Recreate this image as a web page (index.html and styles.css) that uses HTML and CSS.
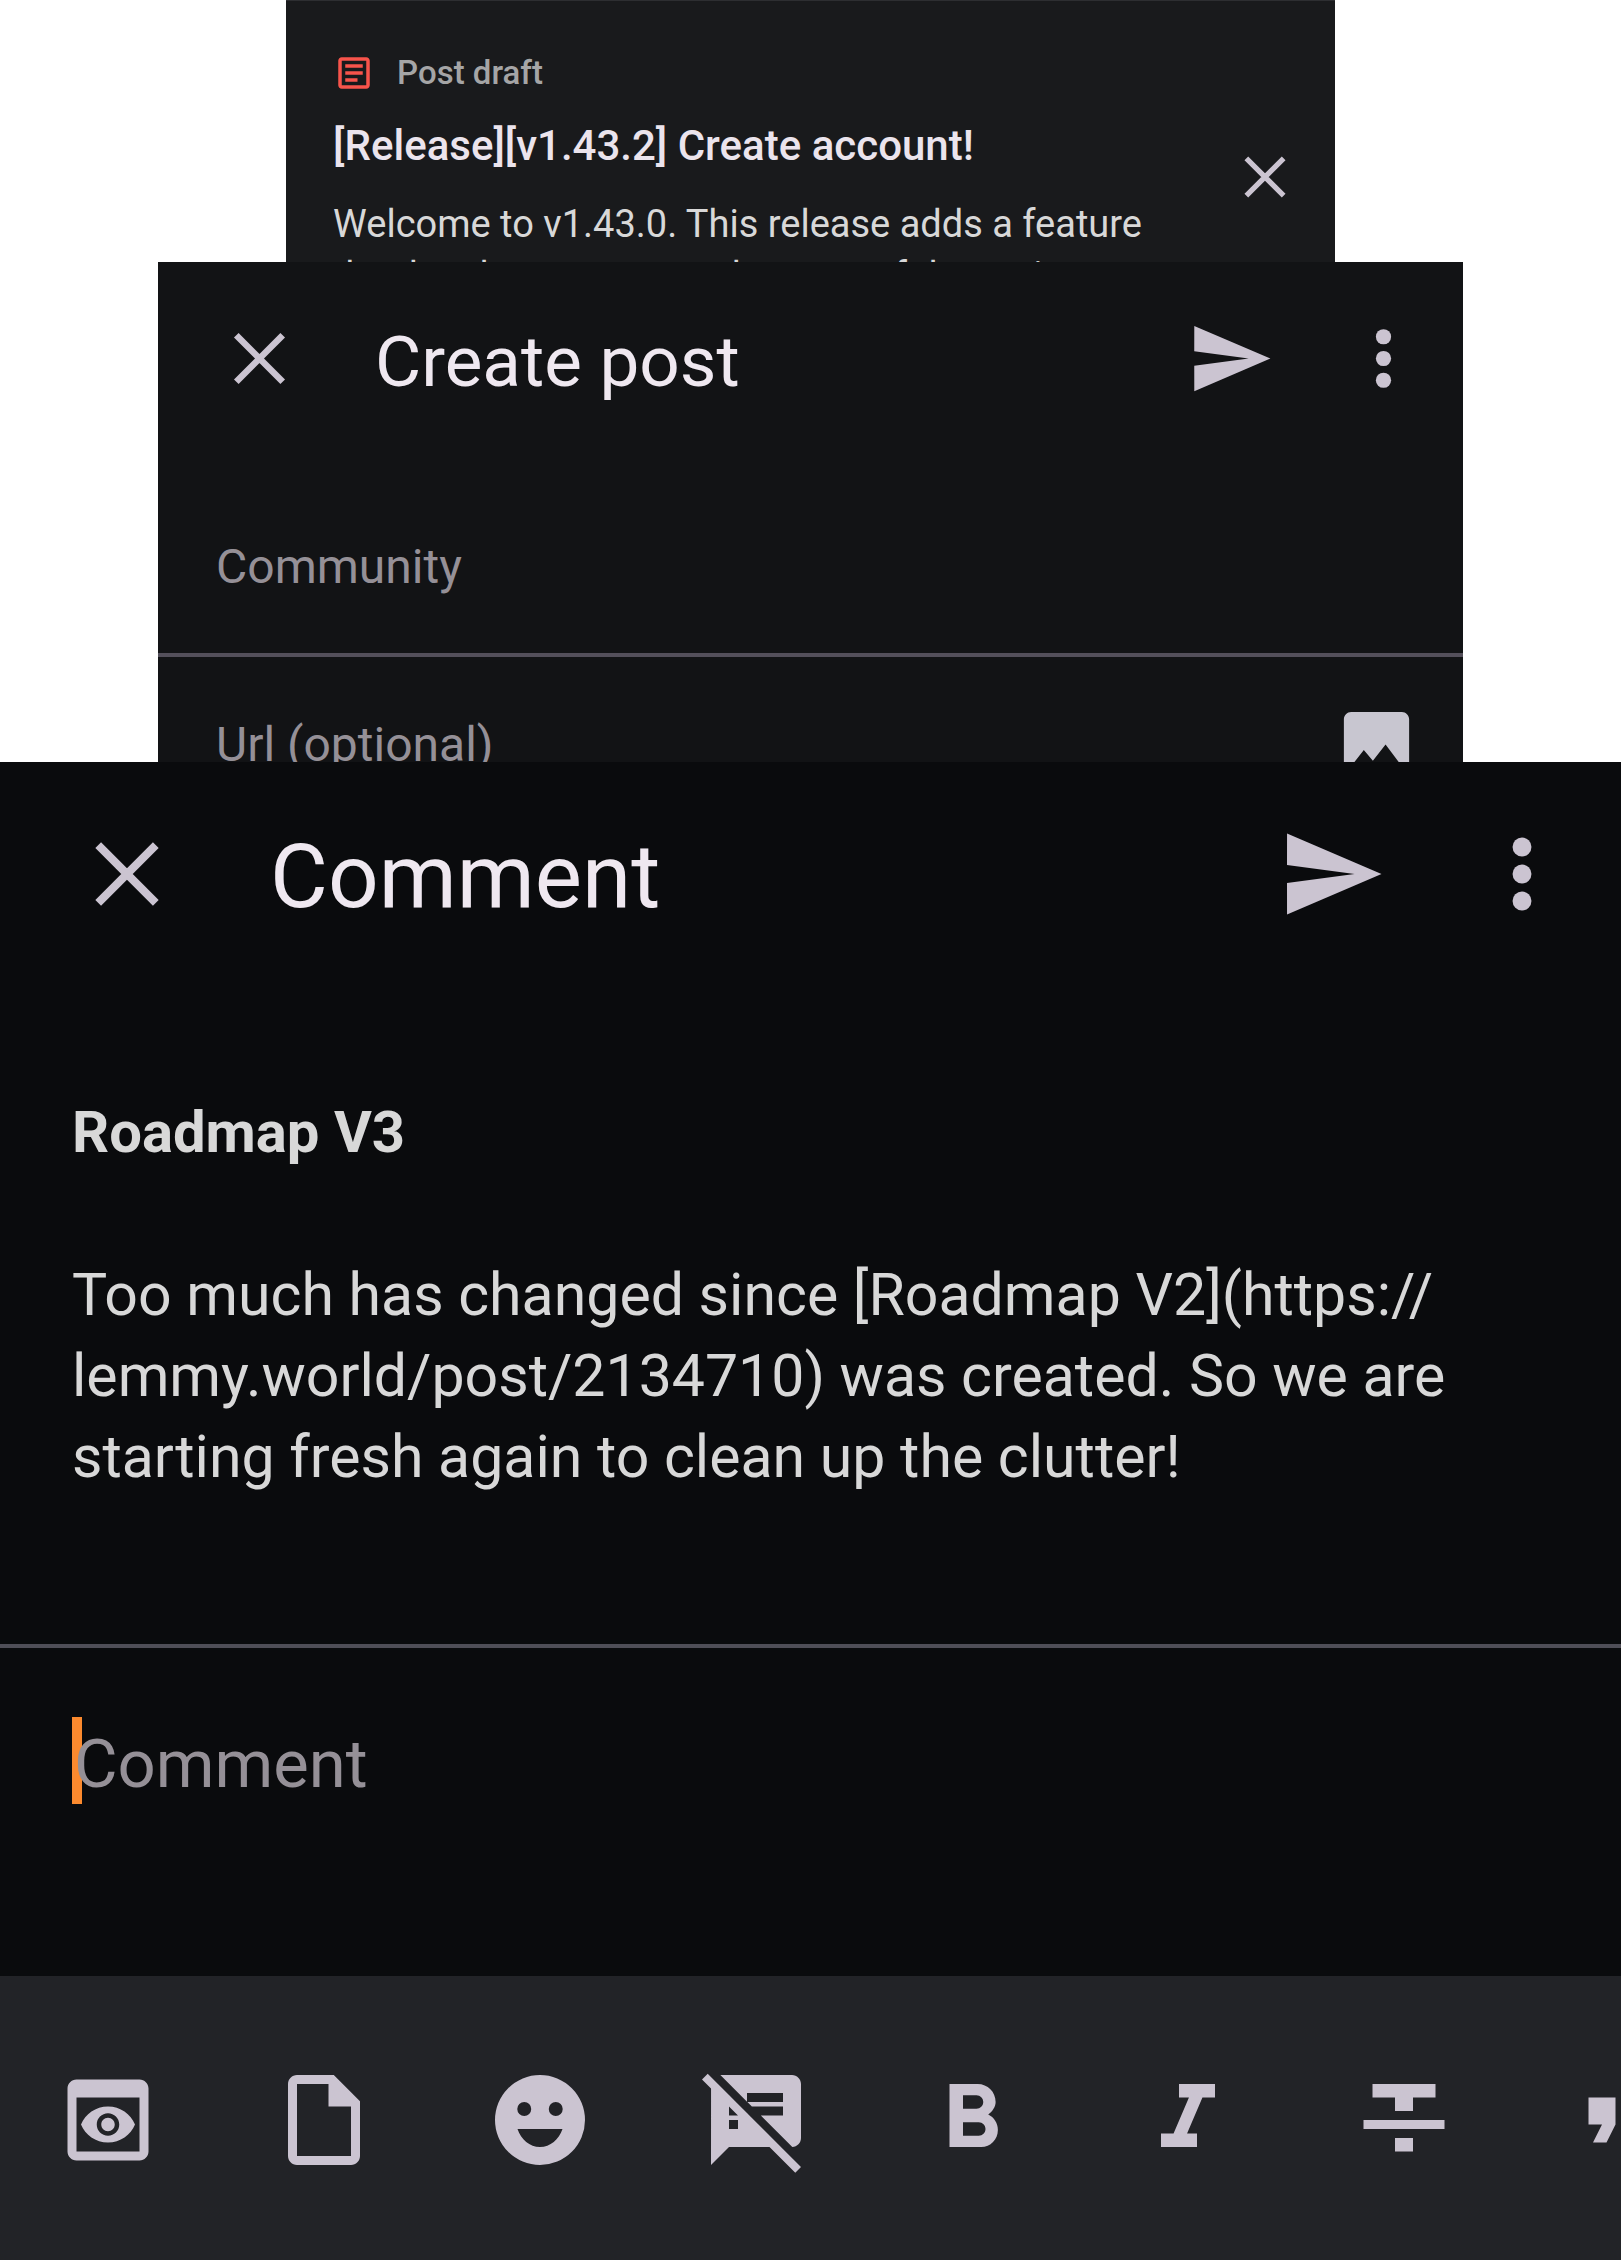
FILE: index.html
```html
<!DOCTYPE html>
<html lang="en">
<head>
<meta charset="utf-8">
<meta name="viewport" content="width=device-width, initial-scale=1">
<title>Drafts, posts and comments</title>
<link rel="stylesheet" href="styles.css">
</head>
<body>
<svg class="sprite" aria-hidden="true">
  <symbol id="close" viewBox="0 0 24 24"><path d="M5.600 5.600l12.800 12.800M18.400 5.600l-12.800 12.800" fill="none" stroke="currentColor" stroke-width="1.800"/></symbol>
  <symbol id="send" viewBox="0 0 24 24"><path d="M2.010 21L23 12 2.010 3 2 10l15 2-15 2z"/></symbol>
  <symbol id="more" viewBox="0 0 24 24"><circle cx="12" cy="6" r="2.100"/><circle cx="12" cy="12" r="2.100"/><circle cx="12" cy="18" r="2.100"/></symbol>
</svg>
<main class="stack">
  <article class="sheet draft">
    <div class="draft-text">
      <p class="draft-label">
        <svg class="draft-icon" viewBox="0 0 24 24" aria-hidden="true"><path d="M19 5v14H5V5h14m0-2H5c-1.100 0-2 .9-2 2v14c0 1.100.9 2 2 2h14c1.100 0 2-.9 2-2V5c0-1.100-.9-2-2-2zM14 17H7v-2h7zm3-4H7v-2h10zm0-4H7V7h10z"/></svg>
        Post draft
      </p>
      <h2 class="draft-title">[Release][v1.43.2] Create account!</h2>
      <p class="draft-body">Welcome to v1.43.0. This release adds a feature that has been requested as one of the main</p>
    </div>
    <button class="icon-button" type="button" aria-label="Delete draft"><svg class="icon"><use href="#close"/></svg></button>
  </article>

  <section class="sheet post">
    <header class="bar">
      <button class="icon-button" type="button" aria-label="Close"><svg class="icon"><use href="#close"/></svg></button>
      <h1 class="title">Create post</h1>
      <button class="icon-button" type="button" aria-label="Send"><svg class="icon"><use href="#send"/></svg></button>
      <button class="icon-button" type="button" aria-label="More options"><svg class="icon"><use href="#more"/></svg></button>
    </header>
    <div class="field">
      <input class="field-input" type="text" placeholder="Community" aria-label="Community">
    </div>
    <div class="field">
      <input class="field-input" type="text" placeholder="Url (optional)" aria-label="Url (optional)">
      <button class="icon-button image-button" type="button" aria-label="Add image"><svg class="icon" viewBox="0 0 24 24"><path d="M21 19V5c0-1.100-.9-2-2-2H5c-1.100 0-2 .9-2 2v14c0 1.100.9 2 2 2h14c1.100 0 2-.9 2-2zM8.500 13.500l2.500 3.010L14.500 12l4.500 6H5z"/></svg></button>
    </div>
  </section>

  <section class="sheet comment">
    <header class="bar">
      <button class="icon-button" type="button" aria-label="Close"><svg class="icon"><use href="#close"/></svg></button>
      <h1 class="title">Comment</h1>
      <button class="icon-button" type="button" aria-label="Send"><svg class="icon"><use href="#send"/></svg></button>
      <button class="icon-button" type="button" aria-label="More options"><svg class="icon"><use href="#more"/></svg></button>
    </header>
    <div class="quoted">
      <h2 class="quoted-title">Roadmap V3</h2>
      <p class="quoted-text">Too much has changed since [Roadmap V2](https://<wbr>lemmy.world/post/2134710) was created. So we are starting fresh again to clean up the clutter!</p>
    </div>
    <div class="composer">
      <span class="caret"></span>
      <textarea class="composer-input" rows="1" placeholder="Comment" aria-label="Comment"></textarea>
    </div>
    <div class="toolbar" role="toolbar" aria-label="Formatting">
      <button class="tool" type="button" aria-label="Preview"><svg class="icon" viewBox="0 0 24 24"><path d="M19 3H5c-1.110 0-2 .9-2 2v14c0 1.100.89 2 2 2h14c1.100 0 2-.9 2-2V5c0-1.100-.89-2-2-2zm0 16H5V7h14v12zm-5.500-6c0 .83-.67 1.500-1.500 1.500s-1.500-.67-1.500-1.500.67-1.500 1.500-1.500 1.500.67 1.500 1.500zM12 9c-2.730 0-5.060 1.660-6 4 .94 2.340 3.270 4 6 4s5.060-1.660 6-4c-.94-2.340-3.270-4-6-4zm0 6.500c-1.380 0-2.500-1.120-2.500-2.500s1.120-2.500 2.500-2.500 2.500 1.120 2.500 2.500-1.120 2.500-2.500 2.500z"/></svg></button>
      <button class="tool" type="button" aria-label="Drafts"><svg class="icon" viewBox="0 0 24 24"><path fill-rule="evenodd" d="M6 2c-1.100 0-2 .9-2 2v16c0 1.100.9 2 2 2h12c1.100 0 2-.9 2-2V7.830L14.170 2zM6 4h7v5h5v11H6z"/></svg></button>
      <button class="tool" type="button" aria-label="Emoji"><svg class="icon" viewBox="0 0 24 24"><path fill-rule="evenodd" d="M12 2a10 10 0 1 0 0 20 10 10 0 0 0 0-20zM8.500 8a1.550 1.550 0 1 1 0 3.100 1.550 1.550 0 0 1 0-3.100zM15.500 8a1.550 1.550 0 1 1 0 3.100 1.550 1.550 0 0 1 0-3.100zM12 18c-2.280 0-4.220-1.660-5-4h10c-.78 2.340-2.720 4-5 4z"/></svg></button>
      <button class="tool" type="button" aria-label="Spoiler"><svg class="icon" viewBox="0 0 24 24"><path d="M10.540 11l-.54-.54L7.540 8 6 6.460 2.380 2.840 1.270 1.730 0 3l2.010 2.010L2 22l4-4h9l5.730 5.730L22 22.460 17.540 18l-7-7zM8 14H6v-2h2v2zm-2-3V9l2 2H6zm14-9H4.080L10 7.920V6h8v2h-7.920l1 1H18v2h-4.920l6.990 6.990C21.140 17.950 22 17.080 22 16V4c0-1.100-.9-2-2-2z"/></svg></button>
      <button class="tool" type="button" aria-label="Bold"><svg class="icon" viewBox="0 0 24 24"><path d="M15.600 10.790c.97-.67 1.650-1.770 1.650-2.790 0-2.260-1.750-4-4-4H7v14h7.040c2.090 0 3.710-1.700 3.710-3.790 0-1.520-.86-2.820-2.150-3.420zM10 6.500h3c.83 0 1.500.67 1.500 1.500s-.67 1.500-1.500 1.500h-3v-3zm3.500 9H10v-3h3.500c.83 0 1.500.67 1.500 1.500s-.67 1.500-1.500 1.500z"/></svg></button>
      <button class="tool" type="button" aria-label="Italic"><svg class="icon" viewBox="0 0 24 24"><path d="M10 4v3h2.210l-3.420 8H6v3h8v-3h-2.210l3.420-8H18V4z"/></svg></button>
      <button class="tool" type="button" aria-label="Strikethrough"><svg class="icon" viewBox="0 0 24 24"><path d="M10 19h4v-3h-4v3zM5 4v3h5v3h4V7h5V4H5zM3 14h18v-2H3v2z"/></svg></button>
      <button class="tool" type="button" aria-label="Quote"><svg class="icon" viewBox="0 0 24 24"><path d="M6 17h3l2-4V7H5v6h3zm8 0h3l2-4V7h-6v6h3z"/></svg></button>
    </div>
  </section>
</main>
</body>
</html>
```

FILE: styles.css
```css
* {
  box-sizing: border-box;
}

body {
  margin: 0;
  background: #fff;
  font-family: Roboto, "Liberation Sans", sans-serif;
  overflow-x: hidden;
}

h1,
h2,
p {
  margin: 0;
}

button,
input,
textarea {
  margin: 0;
  padding: 0;
  border: 0;
  background: none;
  color: inherit;
  font: inherit;
  outline: none;
}

.sprite {
  display: none;
}

.stack {
  display: flex;
  flex-direction: column;
  align-items: center;
}

.sheet {
  position: relative;
  color: #cbc4d1;
}

.icon-button {
  flex: none;
  display: flex;
}

.icon {
  display: block;
  width: var(--icon);
  height: var(--icon);
  fill: currentColor;
}

.bar {
  display: flex;
  align-items: center;
}

.title {
  flex: 1;
  padding-top: 6px;
  color: #efe8f0;
  font-weight: 400;
}

/* Draft card */
.draft {
  --icon: 70px;
  display: flex;
  align-items: center;
  justify-content: space-between;
  gap: 32px;
  width: 64.7%;
  padding: 51px 35px 46px 47px;
  border-top: 1px solid #2d2e31;
  background: #191a1c;
}

.draft-text {
  display: flex;
  flex-direction: column;
  gap: 20px;
}

.draft-label {
  display: flex;
  align-items: center;
  gap: 22px;
  color: #a5a5a6;
  font-size: 33px;
  font-weight: 500;
  line-height: 42px;
}

.draft-icon {
  width: 42px;
  height: 42px;
  fill: #f8544b;
}

.draft-title {
  color: #ebe4ed;
  font-size: 42px;
  font-weight: 500;
  line-height: 64px;
}

.draft-body {
  color: #d8d8d8;
  font-size: 38px;
  line-height: 52px;
}

/* Create post, overlapping the draft card */
.post {
  --icon: 87px;
  width: 80.5%;
  margin-top: -86px;
  background: #121315;
}

.post .bar {
  padding: 53px 36px 78px 58px;
}

.post .title {
  margin-left: 72px;
  font-size: 71px;
  line-height: 81px;
}

.post .icon-button + .icon-button {
  margin-left: 66px;
}

.field {
  display: flex;
  align-items: center;
  height: 173px;
  padding: 0 43px 0 58px;
}

.field + .field {
  height: 178px;
  border-top: 4px solid #534f5a;
}

.field-input {
  flex: 1;
  min-width: 0;
  height: 64px;
  font-size: 48px;
}

.image-button {
  color: #c8c6d0;
}

::placeholder {
  color: #959097;
  opacity: 1;
}

/* Comment, overlapping the post sheet */
.comment {
  --icon: 108px;
  width: 100%;
  margin-top: -69px;
  background: #0a0b0d;
}

.comment .bar {
  padding: 58px 45px 0 73px;
}

.comment .title {
  margin-left: 89px;
  font-size: 89px;
  line-height: 102px;
}

.comment .icon-button + .icon-button {
  margin-left: 82px;
}

.quoted {
  padding: 164px 72px 147px;
  color: #d8d8d8;
  font-size: 59px;
  line-height: 81px;
}

.quoted-title {
  margin-bottom: 81px;
  font-size: 58px;
  font-weight: 700;
}

.composer {
  position: relative;
  padding: 69px 72px 159px;
  border-top: 4px solid #4f4e57;
}

.caret {
  position: absolute;
  top: 69px;
  left: 72px;
  width: 10px;
  height: 87px;
  background: #fc8a2e;
}

.composer-input {
  position: relative;
  display: block;
  width: 100%;
  height: 100px;
  padding-top: 9px;
  padding-left: 2px;
  font-size: 67px;
  line-height: 76px;
  resize: none;
  overflow: hidden;
}

.toolbar {
  display: flex;
  overflow: hidden;
  padding: 36px 0 32px;
  background: #222327;
}

.tool {
  flex: none;
  display: flex;
  align-items: center;
  justify-content: center;
  width: 216px;
  height: 216px;
}
```
